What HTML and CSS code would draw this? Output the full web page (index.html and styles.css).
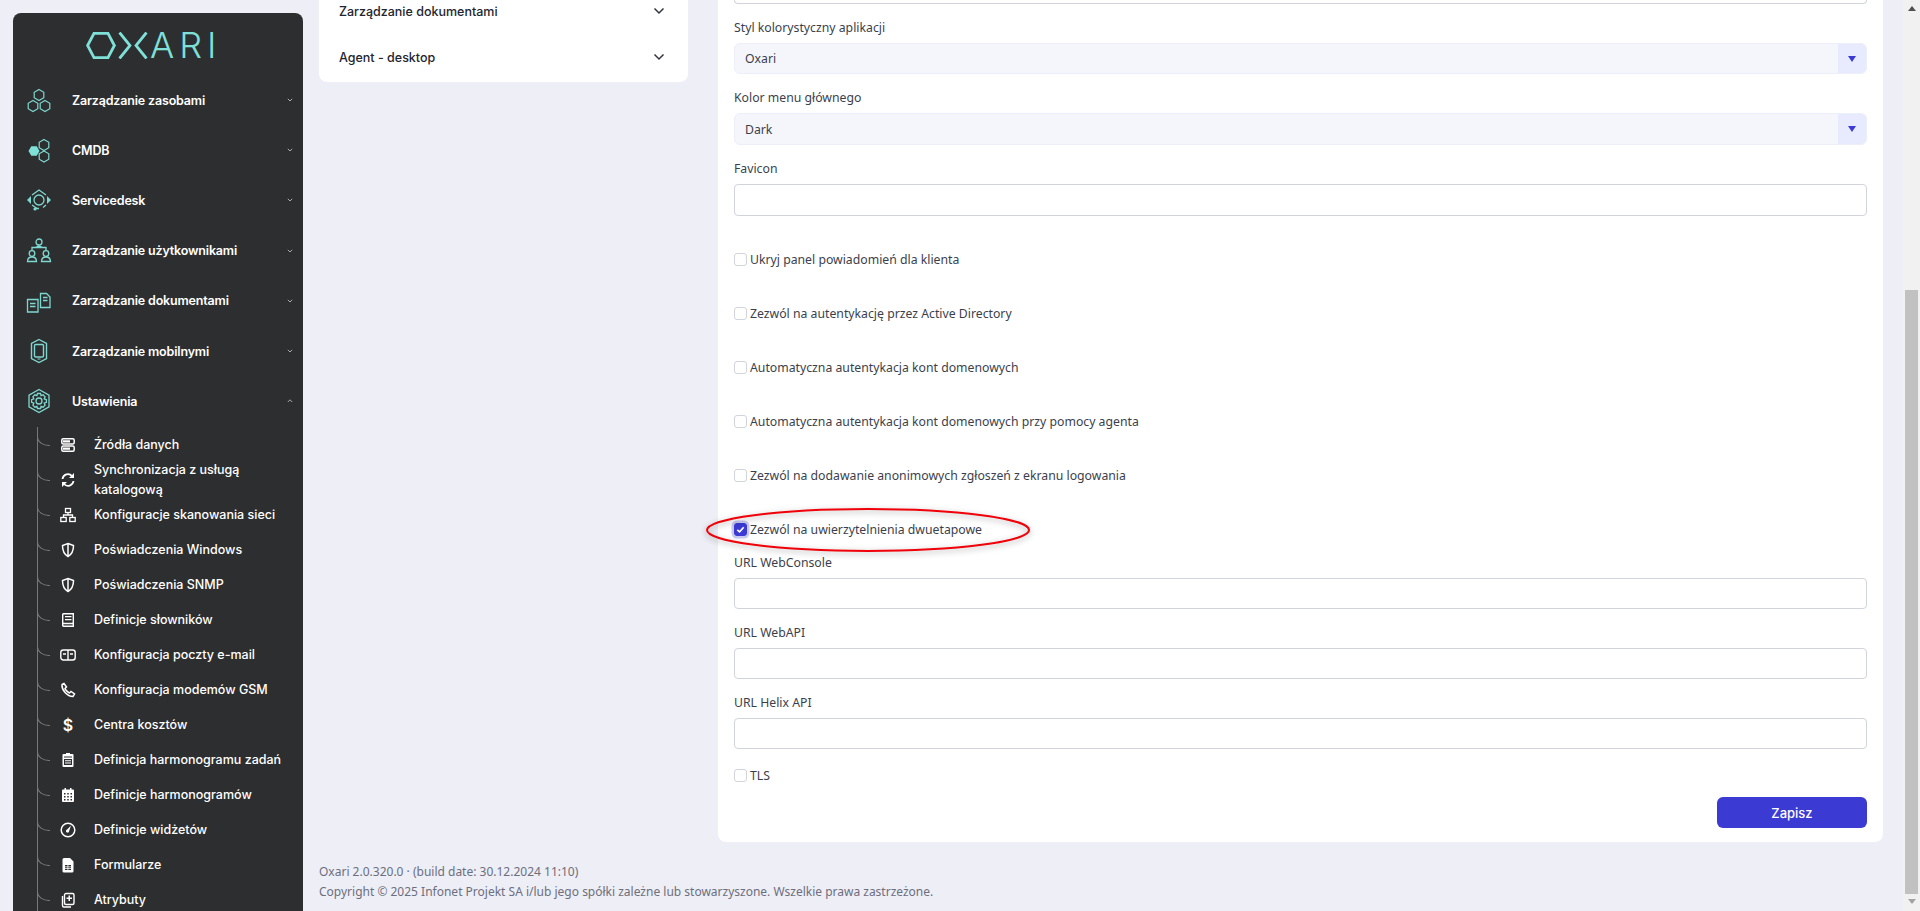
FILE: index.html
```html
<!DOCTYPE html>
<html lang="pl">
<head>
<meta charset="utf-8">
<title>Oxari</title>
<link rel="stylesheet" href="styles.css">
</head>
<body>
<div class="app">
  <aside class="sidebar">
    <div class="logo">
      <svg class="logo-mark" viewBox="0 0 62 27" width="62" height="27"><g fill="none" stroke="#7fe0d8" stroke-width="2.800"><polygon points="1.600,13.500 8,1.400 22,1.400 28.400,13.500 22,25.600 8,25.600"/><path d="M33.500 0.500 44 13.500 33.500 26.500M60.500 0.500 50 13.500 60.500 26.500"/></g></svg>
      <span class="logo-text">ARI</span>
    </div>
    <nav>
      <div class="nav-row">
        <svg class="nav-icon" viewBox="0 0 26 26"><g fill="none" stroke="#7fd8cf" stroke-width="1.2"><polygon transform="translate(13 8)" points="0,-5.5 4.8,-2.75 4.8,2.75 0,5.5 -4.8,2.75 -4.8,-2.75"/><polygon transform="translate(7 19)" points="0,-5.5 4.8,-2.75 4.8,2.75 0,5.5 -4.8,2.75 -4.8,-2.75"/><polygon transform="translate(19 19)" points="0,-5.5 4.8,-2.75 4.8,2.75 0,5.5 -4.8,2.75 -4.8,-2.75"/></g></svg>
        <span class="nav-text">Zarządzanie zasobami</span><svg class="caret" viewBox="0 0 6 4"><path d="M.8.8 3 3 5.2.8"/></svg>
      </div>
      <div class="nav-row">
        <svg class="nav-icon" viewBox="0 0 26 26"><polygon fill="#7fe0d8" transform="translate(8 14)" points="-5.5,0 -2.75,-4.8 2.75,-4.8 5.5,0 2.75,4.8 -2.75,4.8"/><g fill="none" stroke="#7fd8cf" stroke-width="1.2"><polygon transform="translate(18 8)" points="0,-5.5 4.8,-2.75 4.8,2.75 0,5.5 -4.8,2.75 -4.8,-2.75"/><polygon transform="translate(18 19.5)" points="0,-5.5 4.8,-2.75 4.8,2.75 0,5.5 -4.8,2.75 -4.8,-2.75"/></g></svg>
        <span class="nav-text">CMDB</span><svg class="caret" viewBox="0 0 6 4"><path d="M.8.8 3 3 5.2.8"/></svg>
      </div>
      <div class="nav-row">
        <svg class="nav-icon" viewBox="0 0 26 26"><g fill="none" stroke="#7fd8cf" stroke-width="1.3"><path d="M6 8 13 3l7 5M6 18l5 3.5M20 18l-3 2.5"/><circle cx="13" cy="13" r="5"/><path d="M9 21.5h4"/></g><path fill="#7fd8cf" d="M1 13l4-4v8zM25 13l-4-4v8z"/><circle cx="9" cy="22" r="1.6" fill="#7fd8cf"/></svg>
        <span class="nav-text">Servicedesk</span><svg class="caret" viewBox="0 0 6 4"><path d="M.8.8 3 3 5.2.8"/></svg>
      </div>
      <div class="nav-row">
        <svg class="nav-icon" viewBox="0 0 26 26"><g fill="none" stroke="#7fd8cf" stroke-width="1.3"><circle cx="13" cy="4" r="3"/><circle cx="6" cy="15.500" r="2.800"/><circle cx="20" cy="15.500" r="2.800"/><path d="M6 12.500V9.500h14v3"/><path d="M1.500 23.500c0-3 2-4.500 4.500-4.500s4.500 1.500 4.500 4.500zM15.500 23.500c0-3 2-4.500 4.500-4.500s4.500 1.500 4.500 4.500z"/></g><path fill="#7fd8cf" d="M8.500 9.500 13 7l4.500 2.500z"/></svg>
        <span class="nav-text">Zarządzanie użytkownikami</span><svg class="caret" viewBox="0 0 6 4"><path d="M.8.8 3 3 5.2.8"/></svg>
      </div>
      <div class="nav-row">
        <svg class="nav-icon" viewBox="0 0 26 26"><g fill="none" stroke="#7fd8cf" stroke-width="1.300"><path d="M1.500 11.500h10.500v12.500H1.500zM14.500 5.500h6l3.500 3.500v10.500h-9.500z"/><path d="M4 15.500h5.500M4 18.500h5.500M17 9.500h4.500M17 12.500h4.500"/></g></svg>
        <span class="nav-text">Zarządzanie dokumentami</span><svg class="caret" viewBox="0 0 6 4"><path d="M.8.8 3 3 5.2.8"/></svg>
      </div>
      <div class="nav-row">
        <svg class="nav-icon" viewBox="0 0 26 26"><g fill="none" stroke="#7fd8cf" stroke-width="1.400"><polygon points="13,1.500 20.500,5.500 20.500,20.500 13,24.500 5.500,20.500 5.500,5.500"/><rect x="8.500" y="6.500" width="9" height="12.500" rx="1.200"/></g><rect x="11.500" y="20.500" width="3" height="1" fill="#7fd8cf"/></svg>
        <span class="nav-text">Zarządzanie mobilnymi</span><svg class="caret" viewBox="0 0 6 4"><path d="M.8.8 3 3 5.2.8"/></svg>
      </div>
      <div class="nav-row">
        <svg class="nav-icon" viewBox="0 0 26 26"><g fill="none" stroke="#7fd8cf" stroke-width="1.300"><polygon points="13,1.500 23,7.200 23,18.800 13,24.500 3,18.800 3,7.200"/><circle cx="13" cy="13" r="3"/><path d="M11.500 5.500h3l.6 2.200 2-.9 2 2-.9 2 2.200.8v2.800l-2.200.8.900 2-2 2-2-.9-.6 2.200h-3l-.6-2.200-2 .9-2-2 .9-2-2.200-.8v-2.800l2.200-.8-.9-2 2-2 2 .9z"/></g></svg>
        <span class="nav-text">Ustawienia</span><svg class="caret" viewBox="0 0 6 4"><path d="M.8 3 3 .8 5.200 3"/></svg>
      </div>
    </nav>
    <ul class="sub-list">
      <li class="sub-row">
        <svg class="sub-icon" viewBox="0 0 16 16"><g fill="none" stroke="#fff" stroke-width="1.500"><rect x="1.800" y="1.800" width="12.400" height="5.200" rx="1.500"/><rect x="1.800" y="9" width="12.400" height="5.200" rx="1.500"/></g><path stroke="#fff" stroke-width="2.200" d="M3 4.400h7M3 11.600h7"/></svg>
        <span>Źródła danych</span>
      </li>
      <li class="sub-row">
        <svg class="sub-icon" viewBox="0 0 16 16"><g fill="none" stroke="#fff" stroke-width="1.800"><path d="M2.500 7A5.500 5.500 0 0 1 12 4M13.500 9A5.500 5.500 0 0 1 4 12"/></g><path fill="#fff" d="M14 1v5H9zM2 15v-5h5z"/></svg>
        <span>Synchronizacja z usługą katalogową</span>
      </li>
      <li class="sub-row">
        <svg class="sub-icon" viewBox="0 0 16 16"><g fill="none" stroke="#fff" stroke-width="1.300"><rect x="5.500" y="1.500" width="5" height="4"/><rect x=".8" y="10.500" width="5.400" height="4"/><rect x="9.800" y="10.500" width="5.400" height="4"/><path d="M8 5.500v2.500M3.500 10.500V8h9v2.500"/></g></svg>
        <span>Konfiguracje skanowania sieci</span>
      </li>
      <li class="sub-row">
        <svg class="sub-icon" viewBox="0 0 16 16"><path fill="none" stroke="#fff" stroke-width="1.500" d="M8 1.500 13.500 3.500c0 5-1.500 8.800-5.500 11-4-2.200-5.500-6-5.500-11z"/><path stroke="#fff" stroke-width="1.500" d="M8 2v12"/></svg>
        <span>Poświadczenia Windows</span>
      </li>
      <li class="sub-row">
        <svg class="sub-icon" viewBox="0 0 16 16"><path fill="none" stroke="#fff" stroke-width="1.500" d="M8 1.500 13.500 3.500c0 5-1.500 8.800-5.500 11-4-2.200-5.500-6-5.500-11z"/><path stroke="#fff" stroke-width="1.500" d="M8 2v12"/></svg>
        <span>Poświadczenia SNMP</span>
      </li>
      <li class="sub-row">
        <svg class="sub-icon" viewBox="0 0 16 16"><g fill="none" stroke="#fff" stroke-width="1.400"><path d="M3.500 1.700h9.800v12.600H3.500A.9.900 0 0 1 2.700 13.400V2.600a.9.900 0 0 1 .8-.9z"/></g><path fill="#fff" d="M5 4h6.500v1.200H5zM5 7h6.500v1.200H5zM3 10.800h10v1.400H3z"/></svg>
        <span>Definicje słowników</span>
      </li>
      <li class="sub-row">
        <svg class="sub-icon" viewBox="0 0 16 16"><g fill="none" stroke="#fff" stroke-width="1.400"><rect x=".8" y="3" width="14.400" height="10" rx="2.500"/><path d="M8 3v10M3 7h3M10 7h3"/></g></svg>
        <span>Konfiguracja poczty e-mail</span>
      </li>
      <li class="sub-row">
        <svg class="sub-icon" viewBox="0 0 16 16"><path fill="none" stroke="#fff" stroke-width="1.500" d="M4 1.500 2 2.500C1.500 8 7 14.500 13 14.500l1.500-2.500-3.500-2.500-1.500 1.500C8 10.500 5.500 8 5 6.500L6.500 5z"/></svg>
        <span>Konfiguracja modemów GSM</span>
      </li>
      <li class="sub-row">
        <span class="dollar">$</span>
        <span>Centra kosztów</span>
      </li>
      <li class="sub-row">
        <svg class="sub-icon" viewBox="0 0 16 16"><path fill="#fff" d="M6 1h4v1h2.500a1 1 0 0 1 1 1v11a1 1 0 0 1-1 1h-9a1 1 0 0 1-1-1V3a1 1 0 0 1 1-1H6z"/><path fill="#2d2e30" d="M4 4.500h8v1H4zM4 7h8v6H4z"/><path fill="#fff" d="M5 8.300h6v1H5zM5 10.500h6v1H5z"/></svg>
        <span>Definicja harmonogramu zadań</span>
      </li>
      <li class="sub-row">
        <svg class="sub-icon" viewBox="0 0 16 16"><path fill="#fff" d="M4.500 1h1.500v1.500h4V1h1.500v1.500h1.500a1 1 0 0 1 1 1V14a1 1 0 0 1-1 1h-10a1 1 0 0 1-1-1V3.500a1 1 0 0 1 1-1h1.500z"/><path fill="#2d2e30" d="M4 6h1.500v1.500H4zM7.250 6h1.500v1.500h-1.500zM10.500 6H12v1.500h-1.500zM4 9h1.500v1.500H4zM7.250 9h1.500v1.500h-1.500zM10.500 9H12v1.500h-1.500zM4 12h1.500v1.500H4zM7.250 12h1.500v1.500h-1.500zM10.500 12H12v1.500h-1.500z"/></svg>
        <span>Definicje harmonogramów</span>
      </li>
      <li class="sub-row">
        <svg class="sub-icon" viewBox="0 0 16 16"><circle cx="8" cy="8" r="6.800" fill="none" stroke="#fff" stroke-width="1.500"/><path fill="#fff" d="M11 3.500 9 9.500a1.500 1.500 0 0 1-2.800-1z"/><circle cx="7.500" cy="9" r="1.500" fill="#fff"/></svg>
        <span>Definicje widżetów</span>
      </li>
      <li class="sub-row">
        <svg class="sub-icon" viewBox="0 0 16 16"><path fill="#fff" d="M4 1h6l3.500 3.500v9.500a1.500 1.500 0 0 1-1.500 1.500H4A1.500 1.500 0 0 1 2.500 14V2.500A1.500 1.500 0 0 1 4 1z"/><path fill="#2d2e30" d="M5 8h6v5H5z"/><path fill="#fff" d="M5 9.500h6v.8H5zM5 11.300h6v.8H5zM7.500 8h.8v5h-.8z"/></svg>
        <span>Formularze</span>
      </li>
      <li class="sub-row">
        <svg class="sub-icon" viewBox="0 0 16 16"><rect x="4.500" y="1.500" width="9.500" height="11" rx="1.500" fill="#2d2e30" stroke="#fff" stroke-width="1.400"/><path fill="none" stroke="#fff" stroke-width="1.400" d="M2.500 4v9.500a1.500 1.500 0 0 0 1.500 1.500h7"/><path fill="#fff" d="M8.500 3.500h1.500v2h2V7h-2v2H8.500V7h-2V5.500h2z"/></svg>
        <span>Atrybuty</span>
      </li>
    </ul>
  </aside>

  <div class="main">
    <div class="content">
      <section class="side-panel">
        <div class="panel-row panel-row-cut">
          <span>Zarządzanie dokumentami</span>
          <svg class="chev" viewBox="0 0 12 8"><path d="M1.500 1.500 6 6l4.500-4.500"/></svg>
        </div>
        <div class="panel-row">
          <span>Agent - desktop</span>
          <svg class="chev" viewBox="0 0 12 8"><path d="M1.500 1.500 6 6l4.500-4.500"/></svg>
        </div>
      </section>

      <section class="card">
        <div class="input input-cut"></div>

        <div class="field">
          <label class="label">Styl kolorystyczny aplikacji</label>
          <div class="select"><span>Oxari</span><i class="select-btn"><b class="tri"></b></i></div>
        </div>
        <div class="field">
          <label class="label">Kolor menu głównego</label>
          <div class="select select-tall"><span>Dark</span><i class="select-btn"><b class="tri"></b></i></div>
        </div>
        <div class="field">
          <label class="label">Favicon</label>
          <div class="input"></div>
        </div>

        <div class="checks">
          <div class="check-row"><span class="box"></span>Ukryj panel powiadomień dla klienta</div>
          <div class="check-row"><span class="box"></span>Zezwól na autentykację przez Active Directory</div>
          <div class="check-row"><span class="box"></span>Automatyczna autentykacja kont domenowych</div>
          <div class="check-row"><span class="box"></span>Automatyczna autentykacja kont domenowych przy pomocy agenta</div>
          <div class="check-row"><span class="box"></span>Zezwól na dodawanie anonimowych zgłoszeń z ekranu logowania</div>
          <div class="check-row check-row-marked">
            <span class="box box-on"><svg viewBox="0 0 12 12" width="11" height="11"><path d="M2.500 6.300 5 8.500 9.500 3.500" fill="none" stroke="#fff" stroke-width="1.800"/></svg></span>Zezwól na uwierzytelnienia dwuetapowe
            <svg class="ring" viewBox="0 0 330 50" width="330" height="50"><ellipse cx="165" cy="25" rx="161" ry="21" fill="none" stroke="#f00008" stroke-width="2"/></svg>
          </div>
        </div>

        <div class="field">
          <label class="label">URL WebConsole</label>
          <div class="input input-short"></div>
        </div>
        <div class="field">
          <label class="label">URL WebAPI</label>
          <div class="input input-short"></div>
        </div>
        <div class="field">
          <label class="label">URL Helix API</label>
          <div class="input input-short"></div>
        </div>
        <div class="check-row check-tls"><span class="box"></span>TLS</div>
        <div class="actions"><button class="save">Zapisz</button></div>
      </section>
    </div>
    <footer class="footer">
      <div>Oxari 2.0.320.0 · (build date: 30.12.2024 11:10)</div>
      <div>Copyright © 2025 Infonet Projekt SA i/lub jego spółki zależne lub stowarzyszone. Wszelkie prawa zastrzeżone.</div>
    </footer>
  </div>

  <div class="scrollbar">
    <b class="sb-up"></b>
    <div class="sb-thumb"></div>
    <b class="sb-down"></b>
  </div>
</div>
</body>
</html>
```

FILE: styles.css
```css
* { box-sizing: border-box; }
html, body { margin: 0; height: 911px; overflow: hidden; }
body { background: #eeeef6; font-family: "Noto Sans", "Open Sans", sans-serif; color: #3b3f4c; }

.app { display: flex; height: 911px; }

.sidebar {
  width: 290px;
  margin: 13px 0 0 13px;
  background: #2d2e30;
  border-radius: 8px 8px 0 0;
  overflow: hidden;
  flex: none;
  font-family: Inter, sans-serif;
  color: #fff;
}
.logo { height: 62px; display: flex; align-items: flex-start; padding: 19px 0 0 73px; }
.logo-mark { flex: none; }
.logo-text { font-size: 36px; font-weight: 300; line-height: 27px; letter-spacing: 5px; color: #7fe0d8; margin-left: 2px; }

.nav-row { height: 50.2px; display: flex; align-items: center; padding-left: 13px; }
.nav-icon { width: 26px; height: 26px; flex: none; }
.nav-text { font-size: 12.500px; letter-spacing: -.17px; font-weight: 600; margin-left: 20px; white-space: nowrap; }
.caret { width: 6px; height: 4px; margin-left: auto; margin-right: 10px; fill: none; stroke: #a9abad; stroke-width: 1; }

.sub-list { list-style: none; margin: 1px 0 0 24px; padding: 0; border-left: 1px solid #77787a; height: 500px; }
.sub-row { position: relative; height: 35px; display: flex; align-items: center; padding-left: 22px; font-size: 12.500px; font-weight: 500; line-height: 20px; }
.sub-row::before {
  content: "";
  position: absolute;
  left: 0;
  top: 9px;
  width: 12px;
  height: 9px;
  border-left: 1px solid #77787a;
  border-bottom: 1px solid #77787a;
  border-bottom-left-radius: 12px 9px;
  margin-left: -1px;
}
.sub-icon { width: 16px; height: 16px; flex: none; margin-right: 18px; }
.dollar { width: 16px; flex: none; margin-right: 18px; text-align: center; font-size: 16px; font-weight: 600; }

.main { flex: 1; display: flex; flex-direction: column; min-width: 0; }
.content { display: flex; align-items: flex-start; padding-left: 16px; gap: 30px; height: 842px; }

.side-panel { width: 369px; background: #fff; border-radius: 0 0 8px 8px; padding: 0 23px 2px 20px; font-family: Inter, sans-serif; font-size: 12.500px; font-weight: 500; color: #23252e; }
.panel-row { height: 46px; display: flex; align-items: center; justify-content: space-between; }
.panel-row-cut { height: 34px; padding-bottom: 12px; }
.chev { width: 12px; height: 8px; fill: none; stroke: #33353d; stroke-width: 1.500; }

.card { width: 1165px; height: 842px; background: #fff; border-radius: 0 0 8px 8px; padding: 0 16px; font-size: 12.250px; }
.label { display: block; height: 20px; line-height: 22px; margin-bottom: 6px; }
.field { margin-top: 13px; }
.input { height: 32px; border: 1px solid #d2d4dc; border-radius: 4px; background: #fff; }
.input-short { height: 31px; }
.input-cut { height: 4px; border-top: 0; border-radius: 0 0 4px 4px; }
.select { height: 31px; border: 1px solid #eceefa; border-radius: 6px; background: #f5f6fb; display: flex; align-items: center; justify-content: space-between; padding-left: 10px; overflow: hidden; }
.select-tall { height: 32px; }
.select-btn { width: 28px; height: 100%; background: #e8ebfd; display: flex; align-items: center; justify-content: center; }
.tri { width: 0; height: 0; border-left: 4px solid transparent; border-right: 4px solid transparent; border-top: 6px solid #3b3ad3; }

.checks { margin-top: 33px; display: flex; flex-direction: column; gap: 34px; }
.check-row { position: relative; height: 20px; display: flex; align-items: flex-start; line-height: 22px; white-space: nowrap; }
.box { width: 13px; height: 13px; margin-top: 3.500px; border: 1px solid #d2d4dc; border-radius: 3px; background: #fff; margin-right: 3px; flex: none; display: flex; align-items: center; justify-content: center; }
.box-on { background: #3b3ad3; border-color: #3b3ad3; box-shadow: 0 0 0 2.500px #c8c8f2; }
.ring { position: absolute; left: -31px; top: -14px; overflow: visible; filter: drop-shadow(0 2px 3px rgba(0,0,0,.35)); }

.check-tls { margin-top: 16px; }
.actions { display: flex; justify-content: flex-end; margin-top: 12px; }
.save { width: 150px; height: 31px; border: 0; border-radius: 6px; background: #3b3ad3; color: #fff; font-family: Inter, sans-serif; font-size: 13px; font-weight: 500; }

.footer { padding: 20px 0 0 16px; font-size: 12px; line-height: 20px; color: #6c6f7e; }

.scrollbar { width: 17px; flex: none; background: #f1f1f1; display: flex; flex-direction: column; align-items: center; }
.sb-up { width: 0; height: 0; margin-top: 6px; border-left: 4px solid transparent; border-right: 4px solid transparent; border-bottom: 5px solid #505050; }
.sb-thumb { width: 13px; height: 604px; margin-top: 279px; background: #c1c1c1; }
.sb-down { width: 0; height: 0; margin-top: 5px; border-left: 4px solid transparent; border-right: 4px solid transparent; border-top: 5px solid #a3a3a3; }
```
